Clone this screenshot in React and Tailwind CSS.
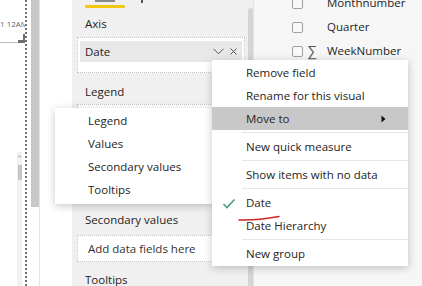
import React from 'react';

const menuItems = [
    { label: 'Remove field' },
    { label: 'Rename for this visual' },
    { label: 'Move to', sub: true, active: true },
    { sep: true },
    { label: 'New quick measure' },
    { sep: true },
    { label: 'Show items with no data' },
    { sep: true },
    { label: 'Date', checked: true },
    { label: 'Date Hierarchy' },
    { sep: true },
    { label: 'New group' },
];

const moveTargets = ['Legend', 'Values', 'Secondary values', 'Tooltips'];

const fields = [
    { name: 'Monthnumber' },
    { name: 'Quarter' },
    { name: 'WeekNumber', sum: true },
];

const ChartStrip = () => (
    <div className="relative w-[25px] h-full flex flex-col items-end shrink-0">
        <div className="h-[19px] shrink-0" />
        <div className="w-full text-right pr-[3px] text-[8px] leading-[10px] text-[#666] whitespace-nowrap overflow-hidden shrink-0">1 12AM</div>
        <div className="flex items-end h-[14px] w-full shrink-0">
            <div className="h-px flex-1 bg-[#bdbdbd]" />
            <div className="w-[5px] h-[3px] bg-[#6d6d6d]" />
            <div className="w-[2px] h-[9px] bg-[#6d6d6d]" />
        </div>
        <div className="flex flex-col items-center w-[5px] mr-[3px] mt-[109px] flex-1 bg-[#f1f1f1]">
            <svg width="5" height="5" viewBox="0 0 5 5" className="mt-[2px]">
                <path d="M1 3.5 L2.5 1.5 L4 3.5" fill="none" stroke="#9a9a9a" strokeWidth="0.8" />
            </svg>
            <div className="w-[4px] h-[15px] mt-[6px] bg-[#c6c6c6]" />
        </div>
    </div>
);

const Label = ({ children, className = '' }) => (
    <div className={`h-[20px] leading-[20px] pl-[13px] text-[11.5px] text-[#252423] ${className}`}>{children}</div>
);

const Well = ({ children, className = '' }) => (
    <div className={`ml-[5px] w-[168px] border border-dotted border-[#c4c4c4] bg-white ${className}`}>{children}</div>
);

const FieldWells = () => (
    <div className="w-[174px] h-full bg-[#f0f0f0] shrink-0">
        <div className="relative h-[14px]">
            <div className="absolute left-[23px] top-0 w-[20px] h-[2px] bg-[#8a8a8a]" />
            <div className="absolute left-[69px] top-0 w-[2px] h-[3px] bg-[#555]" />
            <div className="absolute left-[13px] top-[5px] w-[40px] h-[3px] rounded-full bg-[#f2c811]" />
        </div>
        <Label>Axis</Label>
        <Well className="mt-[3px] h-[36px] pt-[3px] px-[2px]">
            <div className="h-[21px] bg-[#e8e8e8] flex items-center pl-[5px] pr-[5px] text-[11.5px] text-[#252423]">
                <span className="flex-1 pt-px">Date</span>
                <svg width="11" height="7" viewBox="0 0 11 7" className="mr-[6px]">
                    <path d="M0.5 0.8 L5.5 5.8 L10.5 0.8" fill="none" stroke="#555" strokeWidth="1" />
                </svg>
                <svg width="7" height="7" viewBox="0 0 7 7">
                    <path d="M0.5 0.5 L6.5 6.5 M6.5 0.5 L0.5 6.5" fill="none" stroke="#555" strokeWidth="1" />
                </svg>
            </div>
        </Well>
        <Label className="mt-[9px]">Legend</Label>
        <Well className="mt-[2px] h-[36px]" />
        <div className="h-[20px] mt-[4px]" />
        <Well className="mt-[2px] h-[34px]" />
        <Label className="mt-[10px]">Secondary values</Label>
        <Well className="mt-[5px] h-[27px] flex items-center pl-[10px] text-[11.5px] text-[#333]">Add data fields here</Well>
        <Label className="mt-[8px]">Tooltips</Label>
    </div>
);

const FieldList = () => (
    <div className="flex-1 h-full bg-[#f6f6f6] border-l border-[#e3e3e3] pl-[38px]">
        <div className="-mt-[9px]">
            {fields.map((f) => (
                <div key={f.name} className="h-[24px] flex items-center">
                    <div className="w-[11px] h-[11px] border border-[#9f9f9f] rounded-[2px] bg-[#f9f9f9]" />
                    <div className="w-[24px] pl-[5px] text-[14px] leading-none text-[#555]">{f.sum ? '∑' : ''}</div>
                    <span className="text-[11.5px] text-[#252423]">{f.name}</span>
                </div>
            ))}
        </div>
    </div>
);

const SubMenu = () => (
    <div className="absolute left-[55px] top-[108px] w-[157px] bg-white pt-[1px] pb-[3px] shadow-[0_2px_8px_rgba(0,0,0,0.22)]">
        {moveTargets.map((t) => (
            <div key={t} className="h-[23px] flex items-center pl-[33px] text-[11.5px] text-[#252423]">{t}</div>
        ))}
    </div>
);

const ContextMenu = () => (
    <div className="absolute left-[212px] top-[60px] w-[196px] bg-white py-[1px] shadow-[0_2px_8px_rgba(0,0,0,0.22)]">
        {menuItems.map((item, i) =>
            item.sep ? (
                <div key={i} className="my-[2px] ml-[30px] h-px bg-[#e6e6e6]" />
            ) : (
                <div
                    key={i}
                    className={`relative h-[23px] flex items-center pl-[34px] pr-[22px] text-[11.5px] text-[#252423] ${item.active ? 'bg-[#c8c8c8]' : ''}`}
                >
                    {item.checked && (
                        <svg width="14" height="12" viewBox="0 0 14 12" className="absolute left-[10px] top-[7px]">
                            <path d="M1.5 6 L5 9.5 L12.5 1.5" fill="none" stroke="#4f9a82" strokeWidth="1.6" />
                        </svg>
                    )}
                    <span className="flex-1">{item.label}</span>
                    {item.sub && (
                        <svg width="5" height="8" viewBox="0 0 5 8">
                            <path d="M0.5 0.5 L4.5 4 L0.5 7.5 Z" fill="#111" />
                        </svg>
                    )}
                </div>
            )
        )}
    </div>
);

export default function App() {
    return (
        <div className="relative w-[422px] h-[286px] overflow-hidden bg-white flex font-['Open_Sans',sans-serif]">
            <ChartStrip />
            <div className="w-[2px] h-full border-l-2 border-dotted border-[#707070] shrink-0" />
            <div className="w-[4px] shrink-0" />
            <div className="w-[8px] h-full shrink-0 border-r border-[#e2e2e2] box-content">
                <div className="h-[207px] bg-[#c8c8c8]" />
            </div>
            <div className="w-[32px] shrink-0" />
            <FieldWells />
            <div className="w-[7px] h-full bg-[#f0f0f0] pt-[8px] pl-[2px] shrink-0">
                <div className="w-[5px] h-full rounded-t-[3px] bg-[#d4d4d4]" />
            </div>
            <FieldList />
            <SubMenu />
            <ContextMenu />
            <svg width="50" height="12" viewBox="0 0 50 12" className="absolute left-[235px] top-[212px]">
                <path d="M4 8 Q22 8.5 44 4.5" fill="none" stroke="#d42424" strokeWidth="1.5" strokeLinecap="round" />
            </svg>
        </div>
    );
}
